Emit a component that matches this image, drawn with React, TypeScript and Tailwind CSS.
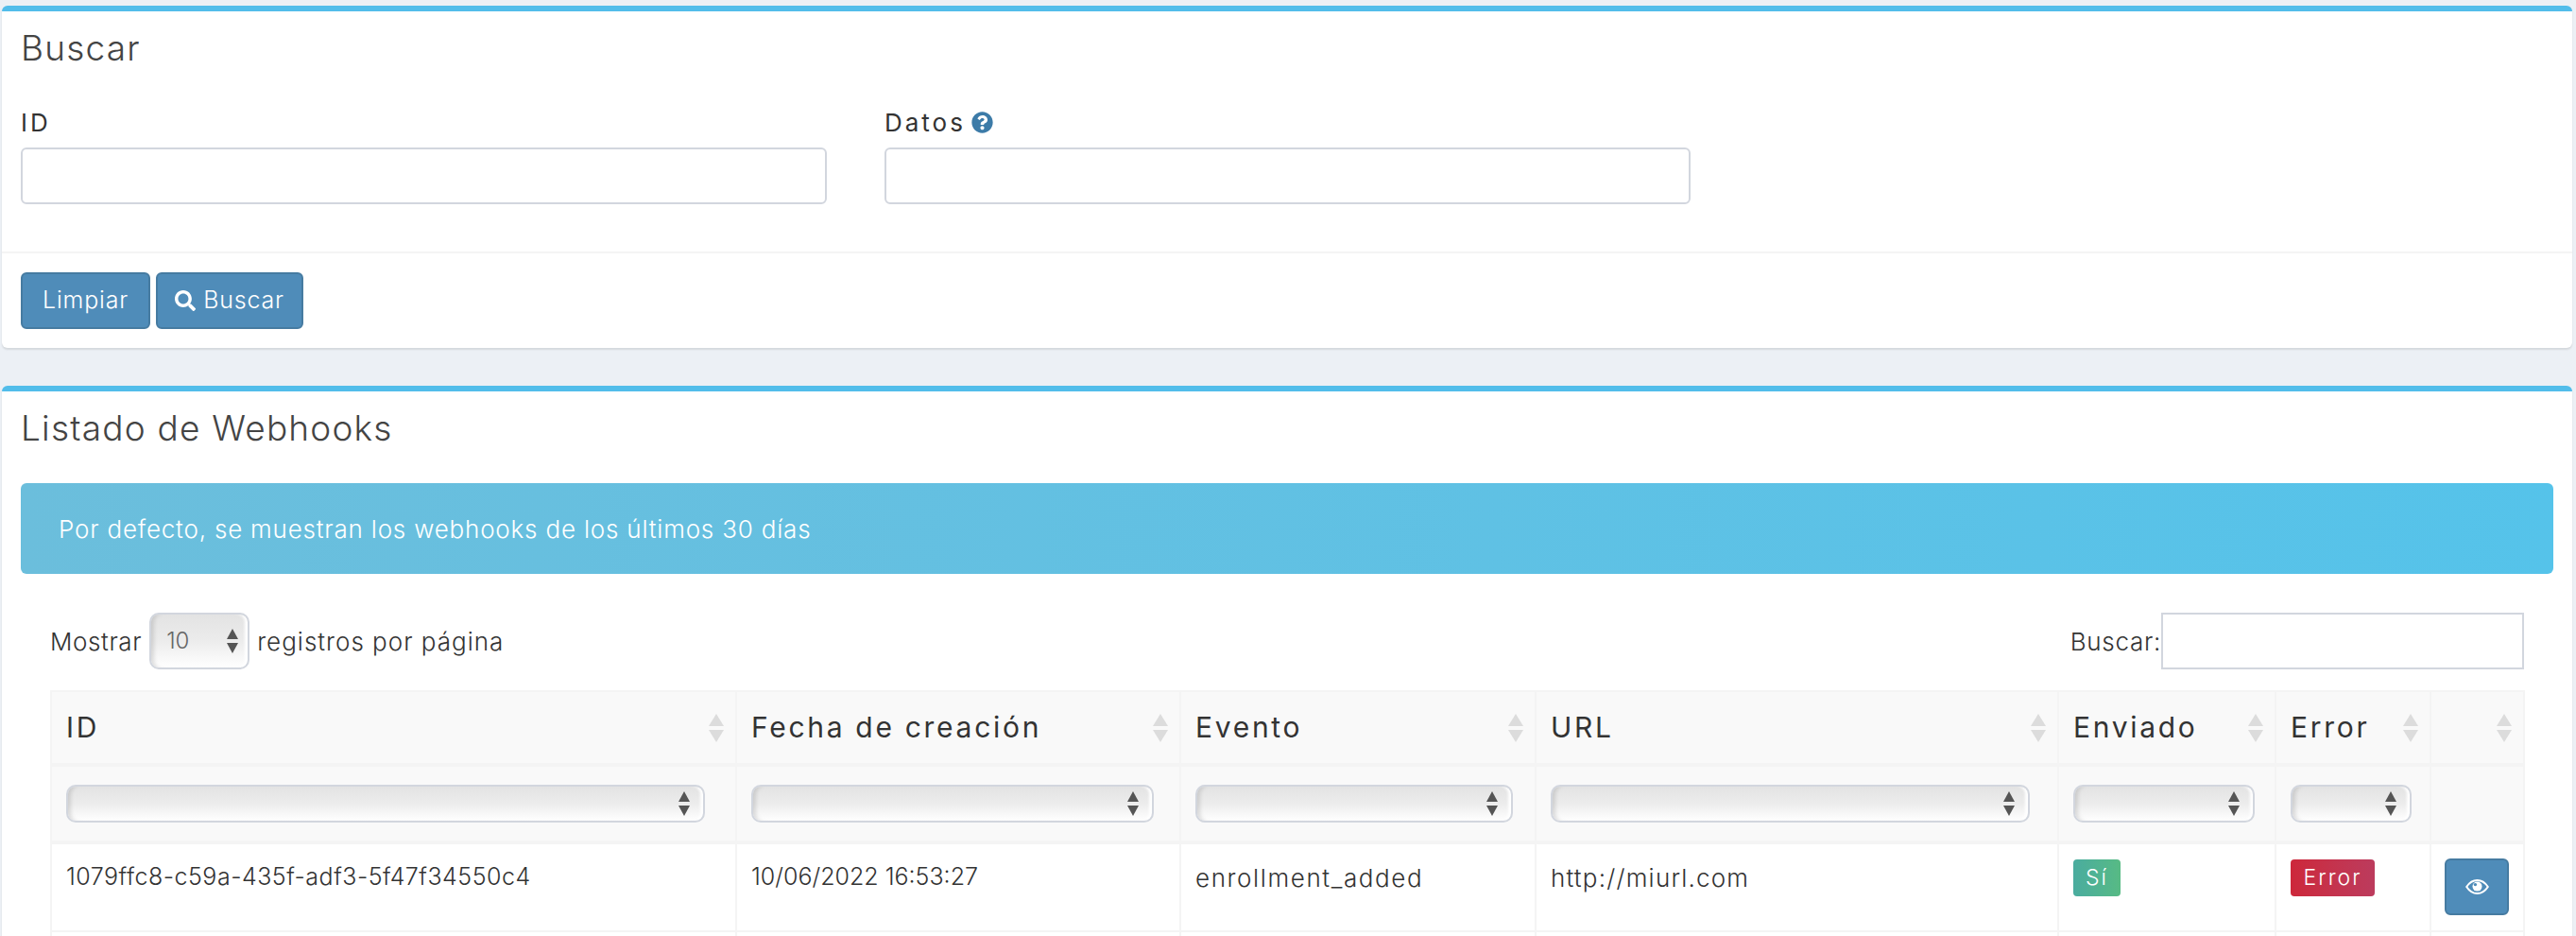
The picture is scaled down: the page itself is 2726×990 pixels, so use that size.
import { FaQuestionCircle, FaSearch } from "react-icons/fa";

const columns = [
  { title: "ID", width: "w-[725px]", selectWidth: "w-[676px]" },
  { title: "Fecha de creación", width: "w-[470px]", selectWidth: "w-[426px]" },
  { title: "Evento", width: "w-[376px]", selectWidth: "w-[336px]" },
  { title: "URL", width: "w-[553px]", selectWidth: "w-[507px]" },
  { title: "Enviado", width: "w-[230px]", selectWidth: "w-[192px]" },
  { title: "Error", width: "w-[164px]", selectWidth: "w-[128px]" },
  { title: "", width: "w-[99px]", selectWidth: "" },
];

function SortIcon() {
  return (
    <svg width="16" height="30" viewBox="0 0 16 30" className="shrink-0 text-[#dcdcdc]" fill="currentColor">
      <path d="M8 0L16 13H0Z" />
      <path d="M8 30L16 17H0Z" />
    </svg>
  );
}

function SelectArrows() {
  return (
    <svg width="12" height="26" viewBox="0 0 12 26" className="shrink-0 text-[#555]" fill="currentColor">
      <path d="M6 0L12 11H0Z" />
      <path d="M6 26L12 15H0Z" />
    </svg>
  );
}

function EyeIcon() {
  return (
    <svg width="25" height="16" viewBox="0 0 25 16" fill="none">
      <path d="M1.2 8C4.2 3.4 8.2 1 12.5 1s8.3 2.4 11.3 7c-3 4.6-7 7-11.3 7S4.2 12.6 1.2 8Z" stroke="white" strokeWidth="2" />
      <circle cx="12.5" cy="7.6" r="5" fill="white" />
      <circle cx="10.4" cy="5.6" r="1.7" fill="#4f8cb9" />
    </svg>
  );
}

function GlossySelect({ className, value }: { className: string; value?: string }) {
  return (
    <div
      className={`flex items-center justify-between rounded-[10px] border-2 border-[#d2d6de] bg-linear-to-b from-[#e3e3e3] via-[#ececec] to-white shadow-[inset_5px_0_4px_-2px_rgba(0,0,0,0.12),inset_-4px_0_3px_-1px_#fff] ${className}`}
    >
      <span className="text-[24px] leading-none font-light text-[#666]">{value}</span>
      <SelectArrows />
    </div>
  );
}

function Box({ title, children }: { title: string; children: React.ReactNode }) {
  return (
    <section className="rounded-[6px] border-t-[6px] border-[#52bdea] bg-white shadow-[0_2px_2px_rgba(0,0,0,0.1)]">
      <h3 className="px-5 pt-[15px] text-[37px] leading-[47px] font-light tracking-[1.2px] text-[#444]">{title}</h3>
      {children}
    </section>
  );
}

function Field({ children }: { children: React.ReactNode }) {
  return (
    <div className="w-[853px]">
      <label className="flex h-[34px] items-center gap-[6px] text-[26px] tracking-[3px] text-[#333]">{children}</label>
      <input className="mt-[10px] block h-[60px] w-full rounded-[6px] border-2 border-[#d2d6de] bg-white" />
    </div>
  );
}

function PrimaryButton({ children, className }: { children: React.ReactNode; className?: string }) {
  return (
    <button
      className={`flex h-[60px] items-center justify-center gap-2 rounded-[6px] border-2 border-[#467ba1] bg-[#4f8cb9] text-[25px] font-light tracking-[0.8px] text-white ${className ?? ""}`}
    >
      {children}
    </button>
  );
}

const cellClass = "border-x-2 border-[#f4f4f4] px-[15px] pt-[16px]";

export default function App() {
  return (
    <div className="h-[990px] overflow-hidden bg-[#ecf0f5] pt-[6px] pr-[4px] pl-[2px] font-['Inter','Liberation_Sans',sans-serif] text-[#333]">
      <Box title="Buscar">
        <div className="flex gap-[61px] px-5 pt-[38px] pb-[50px]">
          <Field>ID</Field>
          <Field>
            Datos <FaQuestionCircle className="size-[23px] text-[#3c7ba8]" />
          </Field>
        </div>
        <div className="flex gap-[6px] border-t-2 border-[#f4f4f4] px-5 pt-5 pb-5">
          <PrimaryButton className="w-[137px]">Limpiar</PrimaryButton>
          <PrimaryButton className="w-[156px]">
            <FaSearch className="size-[22px]" /> Buscar
          </PrimaryButton>
        </div>
      </Box>

      <div className="h-[40px]" />

      <Box title="Listado de Webhooks">
        <div className="px-5 pt-[35px]">
          <div className="flex h-[96px] items-center rounded-[6px] bg-linear-to-r from-[#6bbedc] to-[#55c3ea] pl-10 text-[26px] font-light tracking-[0.8px] text-white">
            Por defecto, se muestran los webhooks de los últimos 30 días
          </div>

          <div className="px-[31px]">
            <div className="mt-[41px] flex h-[60px] items-center justify-between">
              <div className="flex items-center gap-2 text-[26px] font-light">
                <span className="tracking-[0.6px]">Mostrar</span>
                <GlossySelect className="h-[60px] w-[106px] pr-[10px] pl-[16px]" value="10" />
                <span className="tracking-[1px]">registros por página</span>
              </div>
              <div className="flex items-center text-[26px] font-light tracking-[0.7px]">
                Buscar:
                <input className="h-[60px] w-[384px] border-2 border-[#d2d6de] bg-white" />
              </div>
            </div>

            <table className="mt-[22px] w-[2617px] table-fixed border-collapse">
              <colgroup>
                {columns.map((col) => (
                  <col key={col.title} className={col.width} />
                ))}
              </colgroup>
              <thead className="bg-[#f9f9f9]">
                <tr className="h-[78px] border-2 border-b-4 border-[#f4f4f4]">
                  {columns.map((col) => (
                    <th key={col.title} className="border-x-2 border-[#f4f4f4] pr-[12px] pl-[15px] text-left">
                      <div className="flex items-center justify-between">
                        <span className="text-[30px] font-normal tracking-[2.7px] whitespace-nowrap text-[#333]">{col.title}</span>
                        <SortIcon />
                      </div>
                    </th>
                  ))}
                </tr>
                <tr className="h-[82px] border-2 border-b-4 border-[#f4f4f4]">
                  {columns.map((col) => (
                    <th key={col.title} className="border-x-2 border-[#f4f4f4] px-[15px]">
                      {col.selectWidth && (
                        <GlossySelect className={`h-[40px] pr-[14px] ${col.selectWidth}`} />
                      )}
                    </th>
                  ))}
                </tr>
              </thead>
              <tbody className="text-[25px] font-light">
                <tr className="h-[94px] border-2 border-[#f4f4f4] align-top">
                  <td className={`${cellClass} tracking-[0.5px]`}>1079ffc8-c59a-435f-adf3-5f47f34550c4</td>
                  <td className={cellClass}>10/06/2022 16:53:27</td>
                  <td className={`${cellClass} text-[26px] tracking-[1.6px]`}>enrollment_added</td>
                  <td className={`${cellClass} text-[26px] tracking-[1.2px]`}>http://miurl.com</td>
                  <td className={cellClass}>
                    <span className="inline-flex h-[39px] w-[50px] items-center justify-center rounded-[4px] bg-linear-to-r from-[#4aac9f] to-[#57ba84] text-[23px] font-light tracking-[2px] text-white">
                      Sí
                    </span>
                  </td>
                  <td className={cellClass}>
                    <span className="inline-flex h-[39px] w-[89px] items-center justify-center rounded-[4px] bg-linear-to-r from-[#cd273a] to-[#bc3b5d] text-[23px] font-light tracking-[2px] text-white">
                      Error
                    </span>
                  </td>
                  <td className="border-x-2 border-[#f4f4f4] px-[14px] pt-[15px]">
                    <button className="flex h-[60px] w-[68px] items-center justify-center rounded-[6px] border-2 border-[#467ba1] bg-[#4f8cb9]">
                      <EyeIcon />
                    </button>
                  </td>
                </tr>
                <tr className="h-[20px]">
                  {columns.map((col) => (
                    <td key={col.title} className="border-x-2 border-[#f4f4f4]" />
                  ))}
                </tr>
              </tbody>
            </table>
          </div>
        </div>
      </Box>
    </div>
  );
}
